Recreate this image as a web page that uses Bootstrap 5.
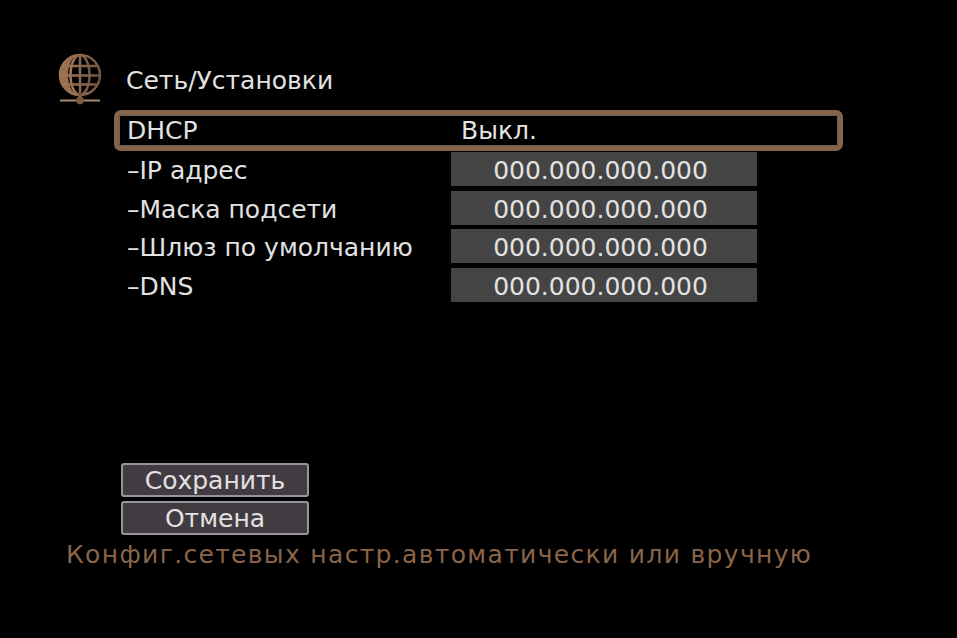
<!DOCTYPE html>
<html lang="ru"><head><meta charset="utf-8"><title>Сеть/Установки</title>
<link href="https://cdn.jsdelivr.net/npm/bootstrap@5.3.0/dist/css/bootstrap.min.css" rel="stylesheet">
<style>
html,body{background:#000;height:100%;overflow:hidden}
body{font-family:"DejaVu Sans",sans-serif;color:#e2e2e2;width:957px;height:638px;padding:52px 0 0 58px;font-size:25px;line-height:34px}
.hd-row{height:58px;gap:22px}
.hd-title{margin-top:12px}
.sel-row{width:729px;height:41px;margin-left:56px;border:5px solid #86644c;border-radius:7px;padding-left:8px;line-height:32px;box-shadow:inset 0 0 0 1px #6b6058}
.lbl{width:324px;padding-left:13px;white-space:nowrap}
.sel-row .lbl{width:334px;padding-left:0}
.rowx{height:34px;margin-left:56px;margin-top:4.500px;line-height:37px}
.sel-row + .rowx{margin-top:1px}
.ipbox{width:306px;height:34px;background:#444;text-align:center;margin-left:13px;padding-right:7px}
.btns{margin:161px 0 0 63px;gap:4px;width:188px}
.act{height:34px;border:2px solid #96949a;border-radius:3px;background:#423c42;text-align:center;line-height:31px}
.hint{color:#8a6549;margin:2px 0 0 8px;letter-spacing:1.330px;white-space:nowrap;line-height:36px}
</style></head><body>
<div class="d-flex hd-row">
<svg width="46" height="54" viewBox="0 0 46 54" class="flex-shrink-0">
<defs><linearGradient id="g" x1="0" x2="1" y1="0" y2="0"><stop offset="0" stop-color="#a57a5c"/><stop offset="1" stop-color="#745640"/></linearGradient></defs>
<g fill="none" stroke="url(#g)"><circle cx="22" cy="23" r="20" stroke-width="2.500"/>
<path d="M2 23C2 12 9 4 19 2c-6 5-9 12-9 21s3 16 9 21C9 42 2 34 2 23z" fill="#96704f" stroke="none"/>
<ellipse cx="22" cy="23" rx="9.500" ry="20" stroke-width="2.500"/>
<path d="M22 3v38M5 14h34M3 23.500h38M5 32.500h34" stroke-width="2.500"/></g>
<rect x="2" y="47.500" width="40" height="2" fill="#a88a72"/><path d="M20 42h4v3a4 4 0 1 1-4 0z" fill="#7b5a43"/></svg>
<div class="hd-title">Сеть/Установки</div></div>
<div class="sel-row d-flex"><div class="lbl">DHCP</div><div>Выкл.</div></div>
<div class="rowx d-flex"><div class="lbl">–IP адрес</div><div class="ipbox">000.000.000.000</div></div>
<div class="rowx d-flex"><div class="lbl">–Маска подсети</div><div class="ipbox">000.000.000.000</div></div>
<div class="rowx d-flex"><div class="lbl">–Шлюз по умолчанию</div><div class="ipbox">000.000.000.000</div></div>
<div class="rowx d-flex"><div class="lbl">–DNS</div><div class="ipbox">000.000.000.000</div></div>
<div class="btns d-flex flex-column"><div class="act">Сохранить</div><div class="act">Отмена</div></div>
<div class="hint">Конфиг.сетевых настр.автоматически или вручную</div>
<script src="https://cdn.jsdelivr.net/npm/bootstrap@5.3.0/dist/js/bootstrap.bundle.min.js"></script>
</body></html>
